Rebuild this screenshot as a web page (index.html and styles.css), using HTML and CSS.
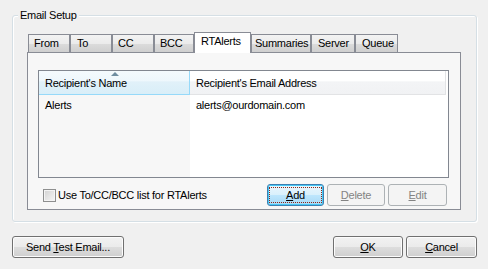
FILE: index.html
```html
<!DOCTYPE html>
<html lang="en">
<head>
    <meta charset="UTF-8">
    <title>Email Setup</title>
    <link rel="stylesheet" href="styles.css">
</head>
<body>
    <div class="group">
        <span class="group-title">Email Setup</span>
        <div class="tabs">
            <div class="tab tab-from">From</div>
            <div class="tab tab-to">To</div>
            <div class="tab tab-cc">CC</div>
            <div class="tab tab-bcc">BCC</div>
            <div class="tab tab-active">RTAlerts</div>
            <div class="tab tab-summaries">Summaries</div>
            <div class="tab tab-server">Server</div>
            <div class="tab tab-queue">Queue</div>
        </div>
        <div class="panel">
            <div class="listview">
                <div class="col col-sorted">
                    <div class="col-head">Recipient's Name<span class="sort-arrow"></span></div>
                    <div class="cell">Alerts</div>
                </div>
                <div class="col col-wide">
                    <div class="col-head">Recipient's Email Address</div>
                    <div class="cell">alerts@ourdomain.com</div>
                </div>
            </div>
            <div class="panel-row">
                <label class="check"><span class="check-box"></span>Use To/CC/BCC list for RTAlerts</label>
                <div class="btn-row">
                    <button class="btn btn-default btn-add"><span class="focus"><u>A</u>dd</span></button>
                    <button class="btn btn-delete" disabled><u>D</u>elete</button>
                    <button class="btn btn-edit" disabled><u>E</u>dit</button>
                </div>
            </div>
        </div>
    </div>

    <div class="footer">
        <button class="btn btn-send">Send <u>T</u>est Email...</button>
        <div class="btn-row">
            <button class="btn btn-ok"><u>O</u>K</button>
            <button class="btn btn-cancel"><u>C</u>ancel</button>
        </div>
    </div>
</body>
</html>
```

FILE: styles.css
```css
body {
    margin: 0;
    background: #f0f0f0;
    font-family: "Liberation Sans", Arial, sans-serif;
    font-size: 11px;
    letter-spacing: -0.25px;
    color: #000;
}

.group {
    position: relative;
    margin: 15px 11px 0 12px;
    height: 207px;
    box-sizing: border-box;
    padding: 16px 15px 11px 14px;
    border: 1px solid #d5dfe5;
    border-radius: 3px;
    box-shadow: 1px 1px 0 #fff, inset 1px 1px 0 #fff;
}

.group-title {
    position: absolute;
    top: -8px;
    left: 5px;
    padding: 0 2px;
    line-height: 14px;
    background: #f0f0f0;
}

/* tab strip */
.tabs {
    display: flex;
    align-items: flex-end;
    height: 20px;
    padding-left: 1px;
}

.tab {
    box-sizing: border-box;
    height: 18px;
    padding: 2px 0 0 5px;
    line-height: 13px;
    white-space: nowrap;
    border: 1px solid #898c95;
    border-bottom: none;
    background: linear-gradient(#f3f3f3 0%, #ebebeb 50%, #dcdcdc 51%, #cfcfcf 100%);
}

.tab-from { width: 42px; }
.tab-to { width: 42px; padding-left: 6px; }
.tab-cc { width: 42px; }
.tab-bcc { width: 40px; }
.tab-summaries { width: 60px; padding-left: 3px; }
.tab-server { width: 44px; padding-left: 6px; }
.tab-queue { width: 43px; padding-left: 6px; }

.tab-active {
    position: relative;
    z-index: 1;
    width: 57px;
    height: 21px;
    margin-bottom: -1px;
    padding: 2px 0 0 6px;
    background: #fff;
}

.panel {
    box-sizing: border-box;
    height: 158px;
    padding: 17px 11px 0 10px;
    border: 1px solid #898c95;
    background: #f7f7f7;
}

/* list view */
.listview {
    display: flex;
    height: 108px;
    box-sizing: border-box;
    border: 1px solid #828790;
    background: #fff;
}

.col {
    display: flex;
    flex-direction: column;
}

.col-sorted {
    width: 151px;
    background: #f7f7f7;
}

.col-wide {
    flex: 1;
}

.col-head {
    position: relative;
    box-sizing: border-box;
    height: 24px;
    padding: 5px 6px 0;
    line-height: 14px;
    border-bottom: 1px solid #e2e3e5;
    border-right: 1px solid #e2e3e5;
    background: linear-gradient(#ffffff 0%, #ffffff 45%, #f3f4f6 46%, #f1f2f4 100%);
}

.col-wide .col-head {
    margin-right: 2px;
}

.col-sorted .col-head {
    border-color: #96d9f9;
    background: linear-gradient(#f4fafd 0%, #eef7fc 45%, #e1f1f9 46%, #d9eef8 100%);
}

.sort-arrow {
    position: absolute;
    top: 1px;
    left: 72px;
    width: 0;
    height: 0;
    border-left: 4px solid transparent;
    border-right: 4px solid transparent;
    border-bottom: 4px solid #6f8da0;
}

.cell {
    padding: 3px 6px;
    line-height: 14px;
}

/* bottom row of the tab page */
.panel-row {
    display: flex;
    justify-content: space-between;
    align-items: center;
    margin-top: 6px;
    padding: 0 2px 0 5px;
}

.check {
    display: flex;
    align-items: center;
    gap: 2px;
}

.check-box {
    width: 11px;
    height: 11px;
    border: 1px solid #8e8f8f;
    box-shadow: inset 0 0 0 1px #f4f4f4;
    background: linear-gradient(135deg, #d2d2d2, #f6f6f6);
}

.btn-row {
    display: flex;
    gap: 3px;
}

.btn {
    box-sizing: border-box;
    height: 22px;
    padding: 0;
    font-family: inherit;
    font-size: 11px;
    letter-spacing: inherit;
    color: #000;
    border: 1px solid #707070;
    border-radius: 3px;
    background: linear-gradient(#f2f2f2 0%, #ebebeb 50%, #dddddd 51%, #cfcfcf 100%);
    box-shadow: inset 0 0 0 1px #fcfcfc;
}

.btn:disabled {
    color: #838383;
    border-color: #adb2b5;
    background: #f4f4f4;
    box-shadow: none;
}

.btn-default {
    border-color: #3c7fb1;
    background: linear-gradient(#eaf6fd 0%, #d9f0fc 50%, #bee6fd 51%, #a7d9f5 100%);
    box-shadow: inset 0 0 0 1px #48c7f4;
}

.focus {
    display: block;
    margin: 2px;
    height: 14px;
    line-height: 14px;
    outline: 1px dotted #8b2a1a;
}

.btn-add { width: 57px; }
.btn-delete { width: 58px; }
.btn-edit { width: 59px; }

/* dialog buttons */
.footer {
    display: flex;
    justify-content: space-between;
    margin-top: 14px;
    padding: 0 11px 0 12px;
}

.btn-send { width: 112px; }
.btn-ok { width: 70px; }
.btn-cancel { width: 71px; }
```
